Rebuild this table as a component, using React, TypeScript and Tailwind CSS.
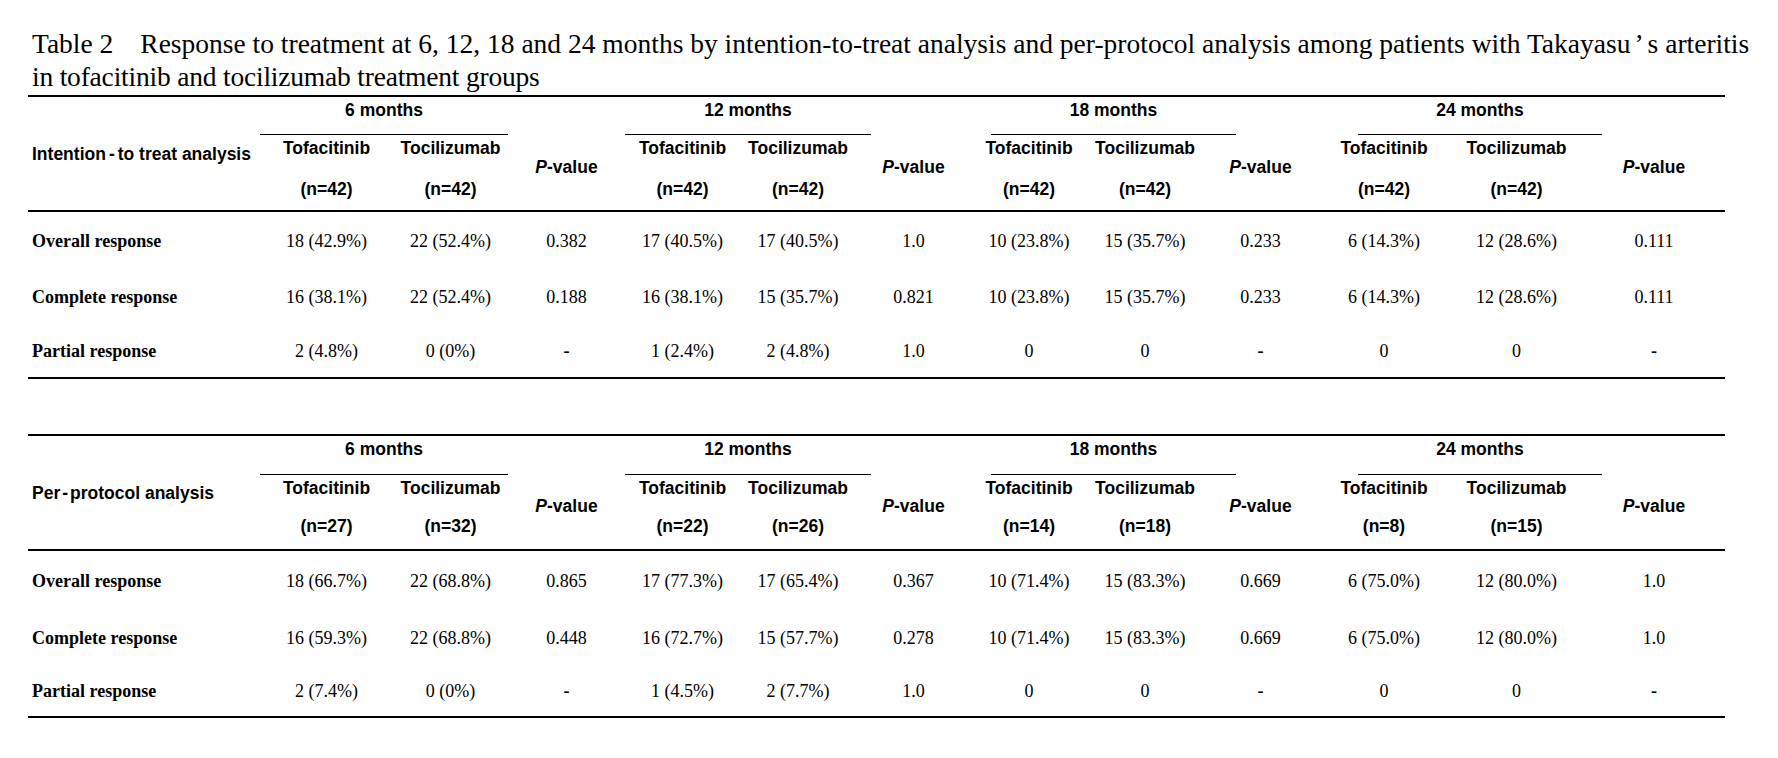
import React from "react";

type Row = { label: string; cells: string[] };

const cols =
  "grid grid-cols-[232px_133px_115px_117px_115px_116px_115px_116px_116px_115px_132px_133px_142px]";

const groups = [
  { title: "6 months", cls: "col-start-2 col-span-2" },
  { title: "12 months", cls: "col-start-5 col-span-2 -mr-[15px]" },
  { title: "18 months", cls: "col-start-8 col-span-2 ml-[20px] -mr-[33px]" },
  { title: "24 months", cls: "col-start-11 col-span-2 ml-[40px] -mr-[19px]" },
];

function PValue() {
  return (
    <span>
      <i>P</i>-value
    </span>
  );
}

function DataTable({
  label,
  n,
  rows,
  headRows,
  nGap,
  pTop,
  rowHeights,
}: {
  label: React.ReactNode;
  n: string[];
  rows: Row[];
  headRows: string;
  nGap: string;
  pTop: string;
  rowHeights: string[];
}) {
  return (
    <div className="w-[1697px] border-t-2 border-b-2 border-black">
      {/* header */}
      <div
        className={`${cols} ${headRows} border-b-2 border-black font-['Liberation_Sans',Arial,sans-serif] text-[17.5px] font-bold leading-[20px]`}
      >
        <div className="row-span-2 col-start-1 row-start-1 flex items-center pl-[4px]">{label}</div>
        {groups.map((g) => (
          <div key={g.title} className={`${g.cls} row-start-1 border-b border-black pt-[3px] text-center`}>
            {g.title}
          </div>
        ))}
        {[0, 1, 2, 3].map((i) => (
          <React.Fragment key={i}>
            <div className="row-start-2 flex flex-col items-center pt-[3px]">
              <span>Tofacitinib</span>
              <span className={nGap}>(n={n[i * 2]})</span>
            </div>
            <div className="row-start-2 flex flex-col items-center pt-[3px]">
              <span>Tocilizumab</span>
              <span className={nGap}>(n={n[i * 2 + 1]})</span>
            </div>
            <div className={`row-start-2 text-center ${pTop}`}>
              <PValue />
            </div>
          </React.Fragment>
        ))}
      </div>
      {/* body */}
      <div className="font-['Liberation_Serif','Times_New_Roman',serif] text-[18px] leading-[22px]">
        {rows.map((r, ri) => (
          <div key={r.label} className={`${cols} ${rowHeights[ri]} items-center`}>
            <div className="pl-[4px] font-bold">{r.label}</div>
            {r.cells.map((c, ci) => (
              <div key={ci} className={`text-center ${c === "-" ? "font-bold" : ""}`}>
                {c}
              </div>
            ))}
          </div>
        ))}
      </div>
    </div>
  );
}

const itt: Row[] = [
  {
    label: "Overall response",
    cells: ["18 (42.9%)", "22 (52.4%)", "0.382", "17 (40.5%)", "17 (40.5%)", "1.0", "10 (23.8%)", "15 (35.7%)", "0.233", "6 (14.3%)", "12 (28.6%)", "0.111"],
  },
  {
    label: "Complete response",
    cells: ["16 (38.1%)", "22 (52.4%)", "0.188", "16 (38.1%)", "15 (35.7%)", "0.821", "10 (23.8%)", "15 (35.7%)", "0.233", "6 (14.3%)", "12 (28.6%)", "0.111"],
  },
  {
    label: "Partial response",
    cells: ["2 (4.8%)", "0 (0%)", "-", "1 (2.4%)", "2 (4.8%)", "1.0", "0", "0", "-", "0", "0", "-"],
  },
];

const pp: Row[] = [
  {
    label: "Overall response",
    cells: ["18 (66.7%)", "22 (68.8%)", "0.865", "17 (77.3%)", "17 (65.4%)", "0.367", "10 (71.4%)", "15 (83.3%)", "0.669", "6 (75.0%)", "12 (80.0%)", "1.0"],
  },
  {
    label: "Complete response",
    cells: ["16 (59.3%)", "22 (68.8%)", "0.448", "16 (72.7%)", "15 (57.7%)", "0.278", "10 (71.4%)", "15 (83.3%)", "0.669", "6 (75.0%)", "12 (80.0%)", "1.0"],
  },
  {
    label: "Partial response",
    cells: ["2 (7.4%)", "0 (0%)", "-", "1 (4.5%)", "2 (7.7%)", "1.0", "0", "0", "-", "0", "0", "-"],
  },
];

export default function App() {
  return (
    <div className="w-[1778px] h-[758px] bg-white text-black overflow-hidden">
      {/* Caption */}
      <div className="pt-[27px] pl-[32px] font-['Liberation_Serif','Times_New_Roman',serif] text-[27.5px] leading-[33px] whitespace-nowrap">
        <div>
          <span className="mr-[27px]">Table 2</span>
          Response to treatment at 6, 12, 18 and 24 months by intention-to-treat analysis and per-protocol analysis
          among patients with Takayasu<span className="mx-[4px]">’</span>s arteritis
        </div>
        <div className="tracking-[-0.2px]">in tofacitinib and tocilizumab treatment groups</div>
      </div>
      <div className="pl-[28px] pt-[2px]">
        <DataTable
          label={
            <span>
              Intention<span className="mx-[3px]">-</span>to treat analysis
            </span>
          }
          n={["42", "42", "42", "42", "42", "42", "42", "42"]}
          rows={itt}
          headRows="grid-rows-[38px_75px]"
          nGap="mt-[21px]"
          pTop="pt-[22px]"
          rowHeights={["h-[58px]", "h-[54px]", "h-[53px]"]}
        />
        <div className="mt-[55px]">
          <DataTable
            label={
              <span>
                Per<span className="mx-[2px]">-</span>protocol analysis
              </span>
            }
            n={["27", "32", "22", "26", "14", "18", "8", "15"]}
            rows={pp}
            headRows="grid-rows-[39px_74px]"
            nGap="mt-[18px]"
            pTop="pt-[21px]"
            rowHeights={["h-[60px]", "h-[54px]", "h-[51px]"]}
          />
        </div>
      </div>
    </div>
  );
}
